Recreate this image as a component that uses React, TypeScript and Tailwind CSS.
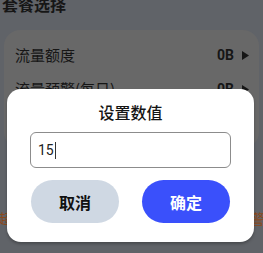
import React from "react";

const font = { fontFamily: '"Noto Sans CJK SC", "Noto Sans", sans-serif' };

function Row({ label }: { label: string }) {
  return (
    <div className="flex items-center h-[34px] pl-[11px] pr-[10px]">
      <span className="text-[15px] text-[#161616] flex-1">{label}</span>
      <span className="text-[14px] font-bold text-[#161616] mr-[8px]" style={{ fontFamily: '"Roboto", sans-serif' }}>0B</span>
      <svg width="7" height="9" viewBox="0 0 7 9"><path d="M0 0 L7 4.5 L0 9 Z" fill="#161616" /></svg>
    </div>
  );
}

export default function App() {
  return (
    <div className="relative w-[263px] h-[253px] overflow-hidden bg-[#606368]" style={font}>
      <div className="px-[2px] -mt-[6px] text-[16px] leading-[20px] font-bold text-[#161616]">套餐选择</div>
      <div className="mx-[4px] mt-[16px] rounded-[16px] bg-[#686868] pt-[8px] pb-[8px]">
        <Row label="流量额度" />
        <Row label="流量预警(每日)" />
        <Row label="流量预警(每月)" />
      </div>
      <div className="mt-[60px] flex justify-center whitespace-nowrap text-[14px] leading-[20px] text-[#8a4a1c]">
        若超出流量额度将自动断网，请注意设置预警！
      </div>

      <div className="absolute left-[7px] top-[89px] w-[247px] h-[153px] rounded-[14px] bg-white shadow-[0_2px_3px_rgba(0,0,0,0.25)] flex flex-col items-center">
        <div className="mt-[11px] text-[16px] leading-[24px] font-medium text-[#141414]">设置数值</div>
        <div className="mt-[8px] w-[201px] h-[36px] rounded-[6px] border border-[#8c8c8c] flex items-center pl-[7px] text-[14px] text-[#222]">
          <span style={{ fontFamily: '"Roboto", sans-serif' }}>15</span>
          <span className="ml-[1px] w-px h-[17px] bg-[#333]" />
        </div>
        <div className="mt-[12px] w-full flex justify-between px-[24px]">
          <button className="w-[88px] h-[43px] rounded-full bg-[#cfd8e3] text-[16px] font-bold text-[#111]">取消</button>
          <button className="w-[88px] h-[43px] rounded-full bg-[#3a50fb] text-[16px] font-bold text-white">确定</button>
        </div>
      </div>
    </div>
  );
}
